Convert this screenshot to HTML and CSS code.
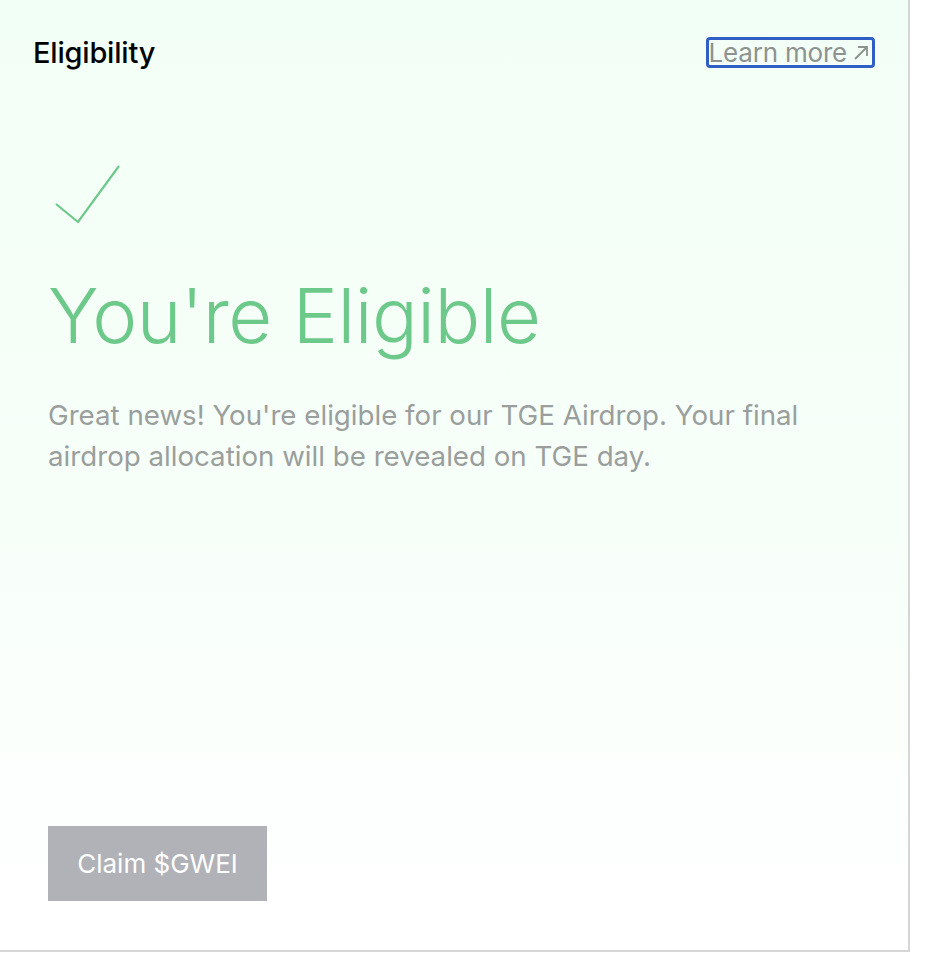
FILE: index.html
```html
<!DOCTYPE html>
<html lang="en">
<head>
<meta charset="utf-8">
<title>Eligibility</title>
<link rel="stylesheet" href="styles.css">
</head>
<body>
<div class="card">
  <header class="card-header">
    <h2 class="card-title">Eligibility</h2>
    <a class="learn-more" href="#">Learn more<svg class="arrow" width="16" height="16" viewBox="0 0 16 16" aria-hidden="true"><path d="M2 14 L14 2 M5 2 H14 V11" fill="none" stroke="#8e928f" stroke-width="1.8"/></svg></a>
  </header>
  <section class="card-body">
    <svg class="check" width="70" height="62" viewBox="0 0 70 62" aria-hidden="true">
      <polyline points="2,40 24,58 65,2" fill="none" stroke="#6cc98a" stroke-width="2.2"/>
    </svg>
    <h1 class="status">You're Eligible</h1>
    <p class="desc">Great news! You're eligible for our TGE Airdrop. Your final airdrop allocation will be revealed on TGE day.</p>
  </section>
  <footer class="card-footer">
    <button class="claim" type="button">Claim $GWEI</button>
  </footer>
</div>
</body>
</html>
```

FILE: styles.css
```css
html, body {
  margin: 0;
  padding: 0;
  background: #ffffff;
}
body {
  font-family: Inter, "Noto Sans", sans-serif;
}
.card {
  box-sizing: border-box;
  width: 910px;
  height: 952px;
  border-right: 2px solid #d6d6d6;
  border-bottom: 2px solid #d6d6d6;
  background: linear-gradient(180deg, #f2fff6 0%, #f7fff9 55%, #ffffff 100%);
  display: flex;
  flex-direction: column;
}
.card-header {
  display: flex;
  justify-content: space-between;
  align-items: center;
  padding: 34px 33px 0 33px;
  height: 36px;
}
.card-title {
  margin: 0;
  font-size: 29px;
  font-weight: 500;
  color: #000;
  letter-spacing: -0.2px;
}
.learn-more {
  font-size: 26px;
  color: #8e928f;
  text-decoration: none;
  border: 3px solid #2f5fc4;
  border-radius: 4px;
  padding: 0 3px 0 0;
  line-height: 25px;
  display: inline-flex;
  align-items: center;
  gap: 6px;
  letter-spacing: -0.2px;
}
.learn-more .arrow {
  display: block;
  margin-top: 2px;
}
.card-body {
  padding: 94px 48px 0 48px;
  flex: 1;
}
.check {
  display: block;
  margin-left: 6px;
}
.status {
  margin: 44px 0 0 0;
  font-size: 76px;
  font-weight: 300;
  color: #6cc98a;
  line-height: 90px;
  letter-spacing: -0.5px;
}
.desc {
  margin: 35px 0 0 0;
  font-size: 27.7px;
  line-height: 41px;
  color: #9a9e9c;
  max-width: 800px;
}
.card-footer {
  padding: 0 48px 49px 48px;
}
.claim {
  font-family: Inter, "Noto Sans", sans-serif;
  background: #b0b2b8;
  color: #ffffff;
  border: none;
  font-size: 26px;
  width: 219px;
  height: 75px;
  padding: 0;
  letter-spacing: 0;
}
```
